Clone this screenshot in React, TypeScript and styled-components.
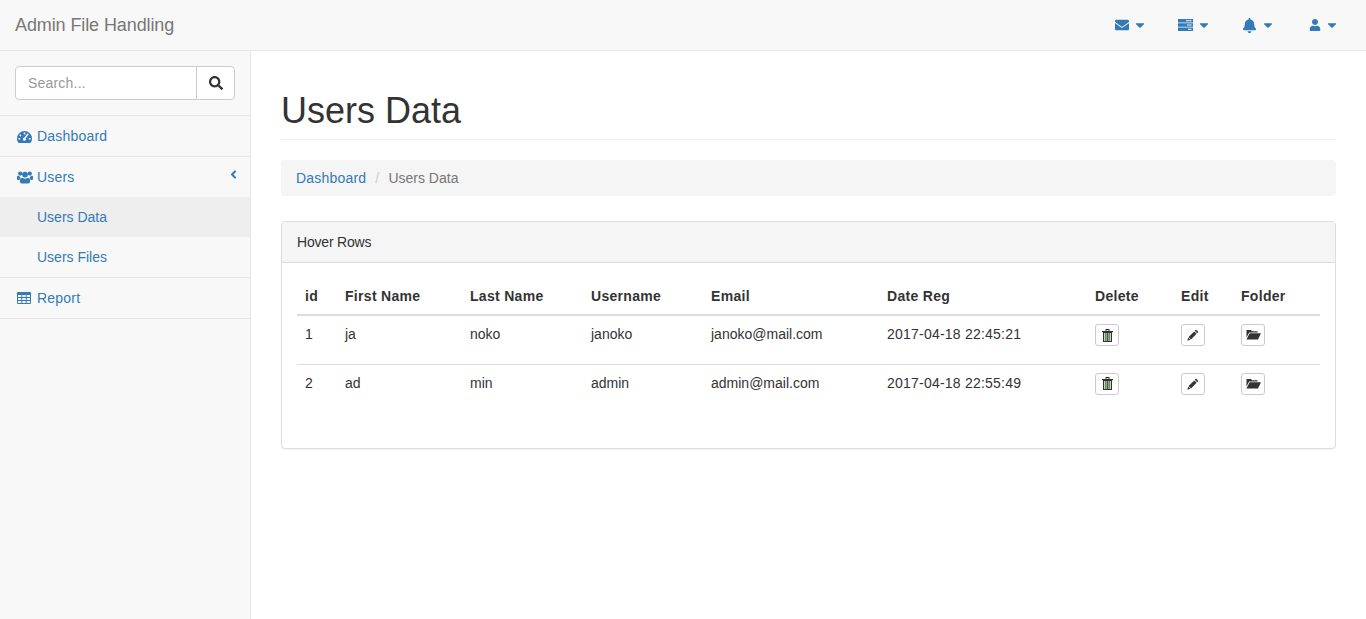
import React from 'react';
import styled, { createGlobalStyle } from 'styled-components';
import { FaAngleLeft, FaBell, FaCaretDown, FaEnvelope, FaSearch, FaUser } from 'react-icons/fa';

const GlobalStyle = createGlobalStyle`
  * {
    box-sizing: border-box;
  }
  html,
  body {
    margin: 0;
    height: 100%;
    background: #fff;
  }
  body {
    font-family: 'Liberation Sans', Arial, sans-serif;
    font-size: 14px;
    line-height: 20px;
    color: #333;
    letter-spacing: 0.2px;
  }
`;

const Navbar = styled.header`
  display: flex;
  align-items: center;
  justify-content: space-between;
  height: 51px;
  background: #f8f8f8;
  border-bottom: 1px solid #e7e7e7;
`;

const Brand = styled.a`
  padding-left: 15px;
  font-size: 18px;
  letter-spacing: -0.1px;
  color: #777;
`;

const NavIcons = styled.nav`
  display: flex;
  padding-right: 27px;
`;

const NavItem = styled.a`
  display: flex;
  align-items: center;
  justify-content: flex-end;
  gap: 4px;
  width: 64px;
  color: #337ab7;
  font-size: 14px;
`;

const Layout = styled.div`
  display: flex;
  height: 568px;
`;

const Sidebar = styled.aside`
  width: 251px;
  flex-shrink: 0;
  background: #f8f8f8;
  border-right: 1px solid #e7e7e7;
`;

const SearchBox = styled.div`
  display: flex;
  padding: 15px;
  height: 65px;
  border-bottom: 1px solid #e7e7e7;
`;

const SearchInput = styled.input`
  flex: 1;
  min-width: 0;
  height: 34px;
  padding: 6px 12px;
  font: inherit;
  letter-spacing: inherit;
  color: #555;
  background: #fff;
  border: 1px solid #ccc;
  border-radius: 4px 0 0 4px;
  outline: none;

  &::placeholder {
    color: #999;
  }
`;

const SearchButton = styled.button`
  display: flex;
  align-items: center;
  justify-content: center;
  width: 39px;
  height: 34px;
  margin-left: -1px;
  padding: 0;
  color: #333;
  background: #fff;
  border: 1px solid #ccc;
  border-radius: 0 4px 4px 0;
  font-size: 14px;
`;

const MenuItem = styled.div`
  border-bottom: 1px solid #e7e7e7;
`;

const MenuLink = styled.a`
  display: flex;
  align-items: center;
  height: 40px;
  padding: 0 10px 0 17px;
  color: #337ab7;
`;

const MenuIcon = styled.span`
  display: flex;
  width: 20px;
`;

const MenuArrow = styled.span`
  display: flex;
  margin-left: auto;
  margin-top: -6px;
  font-size: 13px;
`;

const SubLink = styled.a<{ $active?: boolean }>`
  display: flex;
  align-items: center;
  height: 40px;
  padding-left: 37px;
  letter-spacing: 0;
  color: #337ab7;
  background: ${(p) => (p.$active ? '#eee' : 'transparent')};
`;

const Page = styled.main`
  flex: 1;
  min-width: 0;
  padding: 0 30px;
`;

const Title = styled.h1`
  margin: 40px 0 20px;
  padding-bottom: 8px;
  font-size: 36px;
  font-weight: 500;
  line-height: 40px;
  letter-spacing: 0;
  border-bottom: 1px solid #eee;
`;

const Breadcrumb = styled.ol`
  display: flex;
  margin: 0 0 25px;
  padding: 8px 15px;
  list-style: none;
  background: #f5f5f5;
  border-radius: 4px;
  color: #777;
`;

const Crumb = styled.li`
  letter-spacing: 0;

  a {
    letter-spacing: 0.2px;
    color: #337ab7;
  }
`;

const CrumbDivider = styled.span`
  padding: 0 9px;
  color: #ccc;
`;

const Panel = styled.section`
  height: 228px;
  border: 1px solid #ddd;
  border-radius: 4px;
  box-shadow: 0 1px 1px rgba(0, 0, 0, 0.05);
`;

const PanelHeading = styled.div`
  height: 41px;
  padding: 10px 15px;
  line-height: 20px;
  letter-spacing: -0.2px;
  background: #f5f5f5;
  border-bottom: 1px solid #ddd;
  border-radius: 3px 3px 0 0;
`;

const PanelBody = styled.div`
  padding: 15px;
`;

const Table = styled.table`
  width: 100%;
  table-layout: fixed;
  border-collapse: collapse;
`;

const HeadCell = styled.th`
  height: 37px;
  padding: 8px;
  text-align: left;
  vertical-align: bottom;
  font-weight: 700;
  letter-spacing: 0.3px;
  border-bottom: 2px solid #ddd;
`;

const Cell = styled.td<{ $wide?: boolean }>`
  height: 49px;
  padding: 8px;
  vertical-align: top;
  line-height: 20px;
  letter-spacing: ${(p) => (p.$wide ? '0.22px' : '0')};
  border-top: 1px solid #ddd;
`;

const IconButton = styled.button`
  display: flex;
  align-items: center;
  justify-content: center;
  width: 24px;
  height: 22px;
  padding: 0;
  color: #333;
  background: #fff;
  border: 1px solid #ccc;
  border-radius: 3px;
`;

// glyphs that the icon packages only have in a different cut
const DashboardIcon = () => (
  <svg width="15" height="13" viewBox="0 0 15 13" fill="currentColor">
    <path
      fillRule="evenodd"
      d="M7.5 1a7.5 7.5 0 0 1 7.5 7.5c0 1.5-.4 2.9-1.1 3.9-.2.3-.5.5-.9.5H2c-.4 0-.7-.2-.9-.5C.4 11.4 0 10 0 8.5A7.5 7.5 0 0 1 7.5 1zM6.7 2.6v1.8h1.6V2.6zM3.2 4.2L2.2 5.3l1.2 1.2 1.1-1.1zm8.6 0l-3 4a1.6 1.6 0 1 1-1.3-.7l3-4.2zM1.4 8v1.6h1.8V8zm10.4 0v1.6h1.8V8z"
    />
  </svg>
);

const UsersIcon = () => (
  <svg width="16" height="13" viewBox="0 0 16 13" fill="currentColor">
    <circle cx="3.2" cy="2.6" r="2.1" />
    <circle cx="12.8" cy="2.6" r="2.1" />
    <circle cx="8" cy="3.6" r="2.9" />
    <path d="M0 5.6c0-.5.4-.8.9-.8h1.2c.2 1 .8 1.8 1.6 2.3C3 7.600 2.500 8.300 2.300 9H.9C.4 9 0 8.600 0 8.100zM16 5.600c0-.5-.4-.8-.9-.8h-1.200c-.2 1-.8 1.800-1.600 2.300.7.500 1.200 1.200 1.400 1.900h1.400c.5 0 .9-.4.9-.9zM4.800 7h1c.6.500 1.400.8 2.200.8s1.600-.3 2.200-.8h1c1.100 0 1.800 1 1.800 2.300v1.500c0 1.100-.8 1.700-1.800 1.700H4.800C3.800 12.500 3 11.900 3 10.800V9.300C3 8 3.700 7 4.800 7z" />
  </svg>
);

const TableIcon = () => (
  <svg width="14" height="12" viewBox="0 0 14 12" fill="currentColor">
    <path
      fillRule="evenodd"
      d="M1 0h12a1 1 0 0 1 1 1v10a1 1 0 0 1-1 1H1a1 1 0 0 1-1-1V1a1 1 0 0 1 1-1zm0 3v2h3.300V3zm4.300 0v2h3.400V3zm4.400 0v2H13V3zM1 6v2h3.300V6zm4.300 0v2h3.400V6zm4.400 0v2H13V6zM1 9v2h3.300V9zm4.300 0v2h3.400V9zm4.400 0v2H13V9z"
    />
  </svg>
);

const ServerIcon = () => (
  <svg width="15" height="12" viewBox="0 0 15 12" fill="currentColor">
    <path
      fillRule="evenodd"
      d="M0 0h15v3.400H0zM8 1.200v1h5.500v-1zM0 4.300h15v3.400H0zM9 5.500v1h4.500v-1zM0 8.600h15V12H0zM10 9.800v1h3.500v-1z"
    />
  </svg>
);

const TrashIcon = () => (
  <svg width="11" height="13" viewBox="0 0 11 13">
    <rect x="1.500" y="3.500" width="8" height="9" fill="#b5e0a8" stroke="#333" />
    <path fill="#333" d="M3.500 3.500h.8v9h-.8zM5.100 3.500h.8v9h-.8zM6.700 3.500h.8v9h-.8zM0 2h11v1.200H0zM3.500 0h4v2h-1V1h-2v1h-1z" />
  </svg>
);

const PencilIcon = () => (
  <svg width="12" height="12" viewBox="0 0 12 12" fill="#333">
    <path d="M9 .6l2.400 2.400-1.200 1.200-2.400-2.400zM7.200 2.400l2.400 2.400-5.600 5.600-2.400-2.400zM1.200 8.600l2.200 2.200-3 .9z" />
  </svg>
);

const FolderOpenIcon = () => (
  <svg width="15" height="12" viewBox="0 0 15 12" fill="#333">
    <path d="M.5 1h4.500l1 1.200h5.500v1.300H3.200L.5 8.500zM3.700 4.200H15l-3 6.300H.4z" />
  </svg>
);

const columns = [
  { label: 'id', width: 40 },
  { label: 'First Name', width: 125 },
  { label: 'Last Name', width: 121 },
  { label: 'Username', width: 120 },
  { label: 'Email', width: 176 },
  { label: 'Date Reg', width: 208 },
  { label: 'Delete', width: 86 },
  { label: 'Edit', width: 60 },
  { label: 'Folder', width: 87 },
];

const users = [
  { id: 1, first: 'ja', last: 'noko', username: 'janoko', email: 'janoko@mail.com', date: '2017-04-18 22:45:21' },
  { id: 2, first: 'ad', last: 'min', username: 'admin', email: 'admin@mail.com', date: '2017-04-18 22:55:49' },
];

export default function App() {
  return (
    <>
      <GlobalStyle />
      <Navbar>
        <Brand>Admin File Handling</Brand>
        <NavIcons>
          <NavItem><FaEnvelope size={14} /><FaCaretDown /></NavItem>
          <NavItem><ServerIcon /><FaCaretDown /></NavItem>
          <NavItem><FaBell size={15} /><FaCaretDown /></NavItem>
          <NavItem><FaUser size={12} /><FaCaretDown /></NavItem>
        </NavIcons>
      </Navbar>
      <Layout>
        <Sidebar>
          <SearchBox>
            <SearchInput placeholder="Search..." />
            <SearchButton><FaSearch /></SearchButton>
          </SearchBox>
          <MenuItem>
            <MenuLink><MenuIcon><DashboardIcon /></MenuIcon>Dashboard</MenuLink>
          </MenuItem>
          <MenuItem>
            <MenuLink>
              <MenuIcon><UsersIcon /></MenuIcon>Users
              <MenuArrow><FaAngleLeft /></MenuArrow>
            </MenuLink>
            <SubLink $active>Users Data</SubLink>
            <SubLink>Users Files</SubLink>
          </MenuItem>
          <MenuItem>
            <MenuLink><MenuIcon><TableIcon /></MenuIcon>Report</MenuLink>
          </MenuItem>
        </Sidebar>
        <Page>
          <Title>Users Data</Title>
          <Breadcrumb>
            <Crumb><a>Dashboard</a></Crumb>
            <CrumbDivider>/</CrumbDivider>
            <Crumb>Users Data</Crumb>
          </Breadcrumb>
          <Panel>
            <PanelHeading>Hover Rows</PanelHeading>
            <PanelBody>
              <Table>
                <colgroup>
                  {columns.map((c) => (
                    <col key={c.label} width={c.width} />
                  ))}
                </colgroup>
                <thead>
                  <tr>
                    {columns.map((c) => (
                      <HeadCell key={c.label}>{c.label}</HeadCell>
                    ))}
                  </tr>
                </thead>
                <tbody>
                  {users.map((u) => (
                    <tr key={u.id}>
                      <Cell>{u.id}</Cell>
                      <Cell>{u.first}</Cell>
                      <Cell>{u.last}</Cell>
                      <Cell>{u.username}</Cell>
                      <Cell>{u.email}</Cell>
                      <Cell $wide>{u.date}</Cell>
                      <Cell><IconButton><TrashIcon /></IconButton></Cell>
                      <Cell><IconButton><PencilIcon /></IconButton></Cell>
                      <Cell><IconButton><FolderOpenIcon /></IconButton></Cell>
                    </tr>
                  ))}
                </tbody>
              </Table>
            </PanelBody>
          </Panel>
        </Page>
      </Layout>
    </>
  );
}
